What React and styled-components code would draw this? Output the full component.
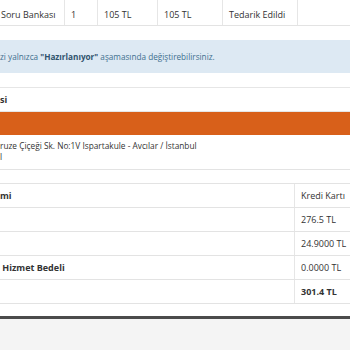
import React from 'react';
import styled, { createGlobalStyle } from 'styled-components';

const GlobalStyle = createGlobalStyle`
  html, body {
    margin: 0;
    padding: 0;
    background: #fff;
    font-family: 'Open Sans', 'Liberation Sans', sans-serif;
    font-size: 9px;
    color: #333;
    overflow: hidden;
  }
`;

////////////////////////////////////////////////////////////////////////////////

const Page = styled.div`
  width: 350px;
  height: 350px;
  display: flex;
  flex-direction: column;
`;

const ItemRow = styled.div`
  display: grid;
  grid-template-columns: 64px 33px 60px 65px 75px 1fr;
  height: 25px;
  border-bottom: 1px solid #e3e3e3;
`;

const ItemCell = styled.div`
  display: flex;
  align-items: center;
  padding-left: ${p => (p.first ? '1px' : '6px')};
  padding-top: 3px;
  border-left: ${p => (p.first ? 'none' : '1px solid #e6e6e6')};
`;

const Alert = styled.div`
  margin-top: 14px;
  height: 33px;
  background: #dde9f3;
  color: #41708f;
  font-size: 8.2px;
  display: flex;
  align-items: center;
  b {
    color: #2f536d;
    font-weight: 700;
  }
`;

const Panel = styled.div`
  margin-top: 14px;
  border-top: 1px solid #e6e6e6;
`;

const PanelTitle = styled.div`
  height: 23px;
  display: flex;
  align-items: center;
  font-weight: 700;
  border-bottom: 1px solid #e6e6e6;
`;

const OrangeBar = styled.div`
  height: 23px;
  background: #d8601a;
`;

const Address = styled.div`
  height: 35px;
  padding-top: 5px;
  box-sizing: border-box;
  font-size: 8.3px;
  line-height: 11px;
  border-bottom: 1px solid #e3e3e3;
`;

const Spacer = styled.div`
  height: 13px;
  border-bottom: 1px solid #e3e3e3;
`;

const SumRow = styled.div`
  display: grid;
  grid-template-columns: 294px 1fr;
  height: 23px;
  border-bottom: 1px solid #e3e3e3;
`;

const SumCell = styled.div`
  display: flex;
  align-items: center;
  white-space: pre;
  font-weight: ${p => (p.bold ? 700 : 400)};
  padding-left: ${p => (p.right ? '6px' : '0')};
  border-left: ${p => (p.right ? '1px solid #e6e6e6' : 'none')};
`;

const Footer = styled.div`
  margin-top: 12px;
  flex: 1;
  background: #f4f4f4;
  border-top: 3px solid #4b4b4b;
`;

////////////////////////////////////////////////////////////////////////////////

const sums = [
  { label: 'mi', value: 'Kredi Kartı', labelBold: true },
  { label: '', value: '276.5 TL' },
  { label: '', value: '24.9000 TL' },
  { label: ' Hizmet Bedeli', value: '0.0000 TL', labelBold: true },
  { label: '', value: '301.4 TL', valueBold: true },
];

const App = () => (
  <Page>
    <GlobalStyle />
    <ItemRow>
      <ItemCell first>Soru Bankası</ItemCell>
      <ItemCell>1</ItemCell>
      <ItemCell>105 TL</ItemCell>
      <ItemCell>105 TL</ItemCell>
      <ItemCell>Tedarik Edildi</ItemCell>
      <ItemCell />
    </ItemRow>

    <Alert>
      <span>
        zi yalnızca <b>"Hazırlanıyor"</b> aşamasında değiştirebilirsiniz.
      </span>
    </Alert>

    <Panel>
      <PanelTitle>si</PanelTitle>
      <OrangeBar />
      <Address>
        ruze Çiçeği Sk. No:1V Ispartakule - Avcılar / İstanbul
        <br />l
      </Address>
      <Spacer />
      {sums.map((s, i) => (
        <SumRow key={i}>
          <SumCell bold={s.labelBold}>{s.label}</SumCell>
          <SumCell right bold={s.valueBold}>
            {s.value}
          </SumCell>
        </SumRow>
      ))}
    </Panel>

    <Footer />
  </Page>
);

export default App;
